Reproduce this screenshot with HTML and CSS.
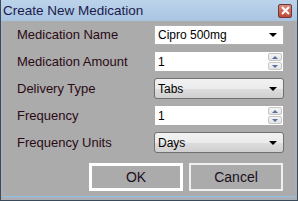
FILE: index.html
```html
<!DOCTYPE html>
<html lang="en">
<head>
  <meta charset="UTF-8">
  <title>Create New Medication</title>
  <link rel="stylesheet" href="styles.css">
</head>
<body>
  <div class="window">
    <div class="titlebar">
      <span class="title">Create New Medication</span>
      <span class="close-btn">
        <svg width="9" height="9" viewBox="0 0 9 9"><path d="M1 1 L8 8 M8 1 L1 8" stroke="#fff" stroke-width="2"/></svg>
      </span>
    </div>
    <div class="client">
      <div class="form">
        <label>Medication Name</label>
        <div class="combo combo-edit"><span>Cipro 500mg</span><i class="arrow"></i></div>

        <label>Medication Amount</label>
        <div class="numeric"><span>1</span>
          <div class="spin"><b class="up"></b><b class="down"></b></div>
        </div>

        <label>Delivery Type</label>
        <div class="combo combo-list"><span>Tabs</span><i class="arrow"></i></div>

        <label>Frequency</label>
        <div class="numeric"><span>1</span>
          <div class="spin"><b class="up"></b><b class="down"></b></div>
        </div>

        <label>Frequency Units</label>
        <div class="combo combo-list"><span>Days</span><i class="arrow"></i></div>
      </div>
      <div class="buttons">
        <button class="btn btn-default">OK</button>
        <button class="btn">Cancel</button>
      </div>
    </div>
  </div>
</body>
</html>
```

FILE: styles.css
```css
body {
  margin: 0;
  font-family: 'Liberation Sans', Arial, sans-serif;
  background: #a9a9a9;
}

.window {
  width: 298px;
  height: 201px;
  box-sizing: border-box;
  background: #abaeb4;
  border: 1px solid #3a4a5a;
  border-top: none;
  display: flex;
  flex-direction: column;
}

.titlebar {
  height: 21px;
  display: flex;
  align-items: center;
  justify-content: space-between;
  padding: 0 5px 0 2px;
  background: linear-gradient(#bcd3ea, #a9c4e2);
}

.title {
  font-size: 13.5px;
  color: #1b1b4b;
}

.close-btn {
  width: 12px;
  height: 12px;
  display: flex;
  align-items: center;
  justify-content: center;
  border: 1px solid #6b3a3a;
  border-radius: 2px;
  background: linear-gradient(#d98a7a, #c0463a);
}

.client {
  flex: 1;
  margin: 0 2px 3px 2px;
  background: #ababab;
  padding: 3px 12px 0 14px;
  border-bottom: 1px solid #8fc3e6;
}

.form {
  display: grid;
  grid-template-columns: 137px 130px;
  grid-auto-rows: 21px;
  row-gap: 6px;
  align-items: center;
}

label {
  font-size: 13px;
  color: #2a0a14;
}

.combo, .numeric {
  box-sizing: border-box;
  height: 20px;
  display: flex;
  align-items: center;
  font-size: 12px;
  color: #000;
}

.combo span, .numeric span {
  flex: 1;
  padding-left: 3px;
}

.combo-edit {
  background: #fff;
  border: 1px solid #b0b0b0;
}

.combo-list {
  height: 21px;
  border: 1px solid #707070;
  border-radius: 3px;
  background: linear-gradient(#f2f2f2 0%, #ebebeb 50%, #dddddd 51%, #cfcfcf 100%);
}

.arrow {
  width: 0;
  height: 0;
  margin-right: 6px;
  border-left: 4px solid transparent;
  border-right: 4px solid transparent;
  border-top: 4px solid #000;
}

.numeric {
  width: 128px;
  margin-left: 1px;
  background: #fff;
  height: 19px;
}

.spin {
  display: flex;
  flex-direction: column;
  gap: 1px;
  margin-right: 1px;
}

.spin b {
  width: 14px;
  height: 8px;
  display: flex;
  align-items: center;
  justify-content: center;
  background: linear-gradient(#f4f4f4, #e4e4e4);
  border: 1px solid #c6c6c6;
  box-sizing: border-box;
  border-radius: 2px;
}

.spin b::after {
  content: '';
  border-left: 3px solid transparent;
  border-right: 3px solid transparent;
}

.spin .up::after {
  border-bottom: 3px solid #5a6ea0;
}

.spin .down::after {
  border-top: 3px solid #5a6ea0;
}

.buttons {
  display: flex;
  justify-content: flex-end;
  gap: 6px;
  margin-top: 10px;
}

.btn {
  box-sizing: border-box;
  width: 94px;
  height: 28px;
  background: #ababab;
  border: 2px solid #f0f0f0;
  font-family: 'Liberation Sans', Arial, sans-serif;
  font-size: 14px;
  color: #1a1020;
  padding: 0;
}

.btn-default {
  border-width: 3px;
  border-color: #fff;
}
```
